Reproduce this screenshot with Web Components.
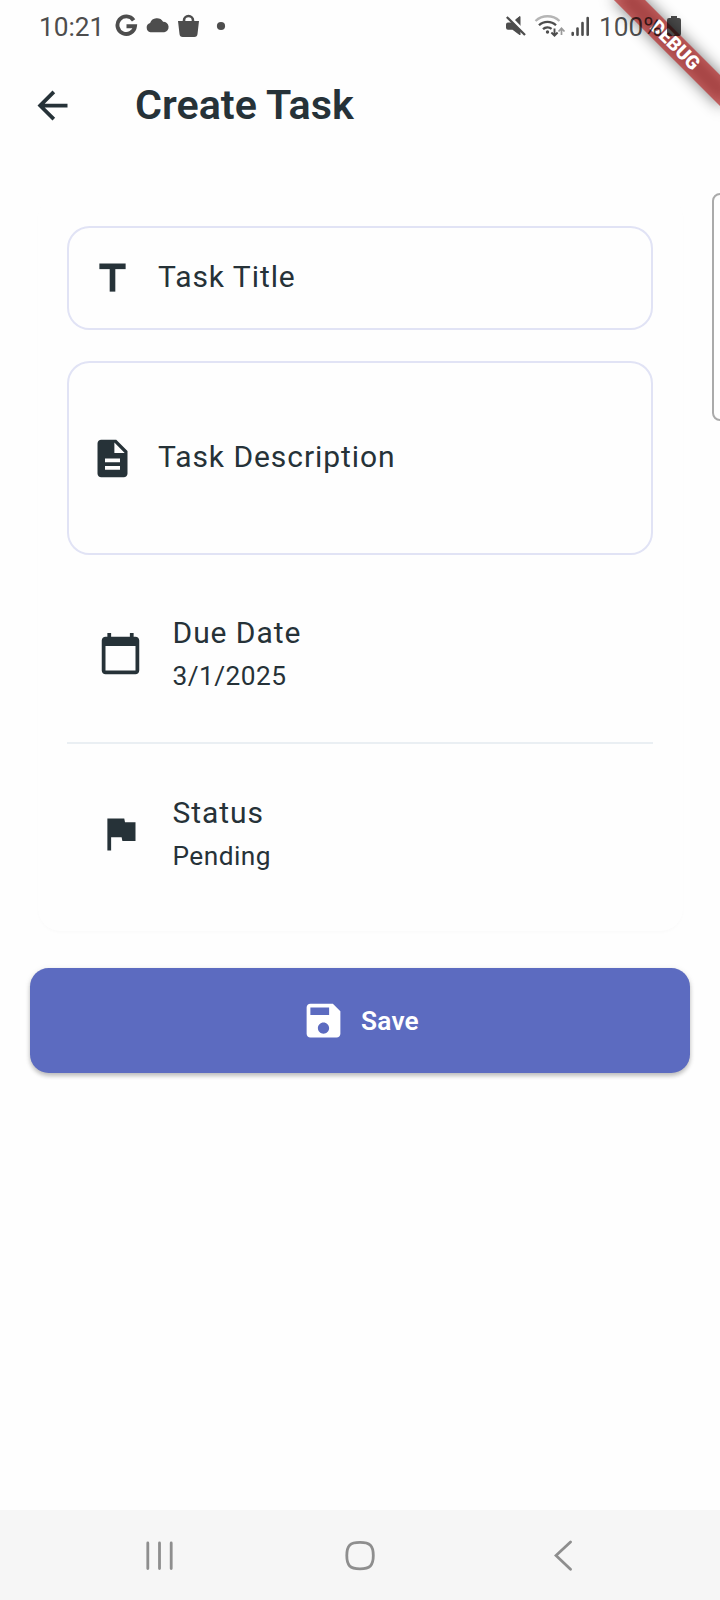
<!DOCTYPE html>
<html lang="en">
<head>
<meta charset="utf-8">
<title>Create Task</title>
<style>
html,body{margin:0;padding:0;background:#fefefe}
body{font-family:Roboto,"Noto Sans",sans-serif;color:#263238}
</style>
</head>
<body>
<phone-screen>
  <status-bar slot="top"></status-bar>
  <app-bar slot="top">Create Task</app-bar>
  <task-card>
    <text-field icon="title" style="--h:104px">Task Title</text-field>
    <text-field icon="description" style="--h:194px">Task Description</text-field>
    <div>
      <list-tile icon="calendar">Due Date<span slot="sub">3/1/2025</span></list-tile>
      <thin-divider></thin-divider>
      <list-tile icon="flag">Status<span slot="sub">Pending</span></list-tile>
    </div>
  </task-card>
  <save-button>Save</save-button>
  <nav-bar slot="bottom"></nav-bar>
  <edge-handle slot="overlay"></edge-handle>
  <debug-banner slot="overlay">DEBUG</debug-banner>
</phone-screen>
<script>
const define = (name, html) => customElements.define(name, class extends HTMLElement {
  constructor() {
    super();
    this.attachShadow({ mode: 'open' }).innerHTML = typeof html === 'function' ? html(this) : html;
  }
});

const ICONS = {
  back: '<path d="M20 11H7.83l5.59-5.59L12 4l-8 8 8 8 1.41-1.41L7.83 13H20v-2z"/>',
  title: '<rect x="5" y="4" width="14" height="3"/><rect x="10.5" y="6.5" width="3" height="12.5"/>',
  description: '<path d="M14 2H6c-1.1 0-1.99.9-1.99 2L4 20c0 1.1.89 2 1.99 2H18c1.1 0 2-.9 2-2V8l-6-6zm2 16H8v-2h8v2zm0-4H8v-2h8v2zm-3-5V3.5L18.5 9H13z"/>',
  calendar: '<path d="M20 3h-1V1h-2v2H7V1H5v2H4c-1.1 0-2 .9-2 2v16c0 1.1.9 2 2 2h16c1.1 0 2-.9 2-2V5c0-1.1-.9-2-2-2zm0 18H4V8h16v13z"/>',
  flag: '<path d="M14.4 6L14 4H5v17h2v-7h5.6l.4 2h7V6z"/>',
  save: '<path d="M17 3H5c-1.11 0-2 .9-2 2v14c0 1.1.89 2 2 2h14c1.1 0 2-.9 2-2V7l-4-4zm-5 16c-1.66 0-3-1.34-3-3s1.34-3 3-3 3 1.34 3 3-1.34 3-3 3zm3-10H5V5h10v4z"/>'
};

define('md-icon', el => `
<style>:host{display:block;width:45px;height:45px;flex:none}svg{display:block;width:45px;height:45px;fill:currentColor}</style>
<svg viewBox="0 0 24 24">${ICONS[el.getAttribute('name')] || ''}</svg>`);

define('phone-screen', `
<style>
:host{display:flex;flex-direction:column;position:relative;width:720px;height:1600px;overflow:hidden;background:#fefefe;isolation:isolate}
main{flex:1;display:flex;flex-direction:column;padding:30px 30px 0;gap:29.5px}
</style>
<slot name="top"></slot><main><slot></slot></main><slot name="bottom"></slot><slot name="overlay"></slot>`);

/* The system status bar is painted above the app, including its debug ribbon. */
define('status-bar', `
<style>
:host{display:flex;position:relative;z-index:2;box-sizing:border-box;height:52.5px;padding:0 38.5px 0 39px;align-items:center;color:#4d4d4d;font-size:26.25px;line-height:30px}
svg{display:block;flex:none}
span{padding-top:2px}
.t{width:76px;white-space:nowrap}
.p{width:67.500px;white-space:nowrap;color:rgba(0,0,0,.7)}
.sp{flex:1}
</style>
<span class="t">10:21</span>
<svg width="115" height="52" viewBox="115 0 115 52" fill="#4d4d4d">
  <path d="M133.600 20.300A8.800 8.800 0 1 0 135 26.200H126.500" fill="none" stroke="#4d4d4d" stroke-width="3.900"/>
  <path d="M150.500 32.200a4.800 4.800 0 0 1-.4-9.300 7.300 7.300 0 0 1 13-1.200 5.300 5.300 0 0 1 1.200 10.500z"/>
  <path d="M178 21h21l-1.500 13a3.300 3.300 0 0 1-3.200 3h-11.600a3.300 3.300 0 0 1-3.200-3z"/>
  <path d="M184 23v-2.500a4.500 4.500 0 0 1 9 0V23" fill="none" stroke="#4d4d4d" stroke-width="2.600"/>
  <circle cx="221" cy="26" r="4.100"/>
</svg>
<span class="sp"></span>
<svg width="95" height="52" viewBox="504.500 0 95 52" fill="#4d4d4d">
  <path d="M506.500 24.500q0-2 2-2h4l7.500-6h1v18.500h-1l-7-5.300h-4.500q-2 0-2-2z"/>
  <path d="M516 19.500l4.500-3.500v9z"/>
  <path d="M509.200 15.800L527.200 34" stroke="#fefefe" stroke-width="3"/>
  <path d="M507.300 17L525.500 35" stroke="#4d4d4d" stroke-width="2.300"/>
  <g fill="none" stroke="#4d4d4d" stroke-width="2.300">
    <path d="M536 21a17.500 17.500 0 0 1 24 0" stroke="#b5b5b5"/>
    <path d="M539.500 25.300a12.200 12.200 0 0 1 17 0"/>
    <path d="M543.500 29.200a6.600 6.600 0 0 1 8.600-.3"/>
    <path d="M555 28.500v7m-3.100-3l3.100 3.200 3.100-3.200" stroke-width="1.900"/>
    <path d="M562 35v-6.500m-3 3l3-3.200 3 3.200" stroke="#999" stroke-width="1.700"/>
  </g>
  <circle cx="548" cy="32" r="1.700"/>
  <g stroke="#4d4d4d" stroke-width="2.600" stroke-linecap="round"><path d="M573.200 33v1.700M578 28.500v6.200M583 23v11.700M588.200 18v16.700"/></g>
</svg>
<span class="p">100%</span>
<svg width="15" height="52" viewBox="667 0 15 52" fill="rgba(0,0,0,.7)"><path d="M671 16h6v2h2a2 2 0 0 1 2 2v14a2 2 0 0 1-2 2h-10a2 2 0 0 1-2-2v-14a2 2 0 0 1 2-2h2z"/></svg>`);

define('app-bar', `
<style>
:host{display:flex;box-sizing:border-box;height:105px;padding-left:30px;align-items:center;gap:60px;color:#263238}
h1{margin:0;font-size:41.25px;line-height:48px;font-weight:600;letter-spacing:0}
</style><md-icon name="back"></md-icon><h1><slot></slot></h1>`);

define('task-card', `
<style>
:host{display:flex;flex-direction:column;gap:31px;margin:7.5px;padding:31px 30px 30px 29.500px;border-radius:22.5px;background:#fefefe;box-shadow:0 2px 3px rgba(0,0,0,.015)}
div{margin-top:-.5px}
::slotted(div){margin-top:-.5px}
</style><slot></slot>`);

define('text-field', el => `
<style>
:host{display:flex;box-sizing:border-box;height:var(--h);align-items:center;gap:23px;padding-left:21px;border:2px solid #e1e3f5;border-radius:22.5px;font-size:30px;line-height:36px;letter-spacing:.94px}
span{position:relative;top:-1px}
</style><md-icon name="${el.getAttribute('icon')}"></md-icon><span><slot></slot></span>`);

define('list-tile', el => `
<style>
:host{display:flex;height:135px;align-items:center;gap:30px;padding:0 30.500px}
b,i{display:block;font-weight:400;font-style:normal}
b{font-size:30px;line-height:45px;letter-spacing:.94px}
i{font-size:26.25px;line-height:42px;letter-spacing:.47px}
</style><md-icon name="${el.getAttribute('icon')}"></md-icon><div><b><slot></slot></b><i><slot name="sub"></slot></i></div>`);

define('thin-divider', `
<style>:host{display:flex;height:45px;align-items:center}hr{flex:1;margin:0;border:0;height:2px;background:#eaeff3}</style><hr>`);

define('save-button', `
<style>
:host{display:flex;height:105px;align-items:center;justify-content:center;gap:15px;border-radius:18.75px;background:#5c6bc0;color:#fff;font-size:26.25px;line-height:36px;font-weight:600;letter-spacing:.19px;box-shadow:0 3px 4px rgba(0,0,0,.22),0 1px 6px rgba(0,0,0,.08)}
span{padding-top:1.500px}
</style><md-icon name="save"></md-icon><span><slot></slot></span>`);

define('nav-bar', `
<style>:host{display:flex;height:90px;background:#f6f6f6;align-items:center;padding:0 145px;box-sizing:border-box;padding-top:1px}
svg{display:block;fill:none;stroke:#8e8e8e;stroke-width:2.800;stroke-linecap:round}
svg:nth-of-type(2){margin:0 178px 0 170px}</style>
<svg width="29" height="32" viewBox="145 1540 29 32"><path d="M147.800 1543v25.500M159.500 1543v25.500M171.200 1543v25.500"/></svg>
<svg width="32" height="32" viewBox="344.500 1540 32 32"><path d="M360.500 1542.300c10 0 13.300 3.200 13.300 13.200s-3.300 13.300-13.300 13.300-13.200-3.300-13.200-13.300 3.200-13.200 13.200-13.200z"/></svg>
<svg width="21" height="32" viewBox="554 1540 21 32"><path d="M570.500 1542l-14.500 13.500 14.500 13.800"/></svg>`);

define('edge-handle', `
<style>:host{display:block;position:absolute;box-sizing:border-box;left:711.5px;top:193px;width:20px;height:227.500px;border:2px solid #aaa;border-radius:8px;background:#fefefe}</style>`);

define('debug-banner', `
<style>
:host{display:block;position:absolute;left:720px;top:0;width:0;height:0;transform:rotate(45deg)}
div{position:absolute;left:-75px;top:52.5px;width:150px;height:22.5px;line-height:22.5px;text-align:center;background:rgba(183,28,28,.63);color:#fff;font-size:19.125px;font-weight:900}
div::before{content:"";position:absolute;inset:0;z-index:-1;background:rgba(0,0,0,.5);filter:blur(7.400px)}
</style><div><slot></slot></div>`);
</script>
</body>
</html>
